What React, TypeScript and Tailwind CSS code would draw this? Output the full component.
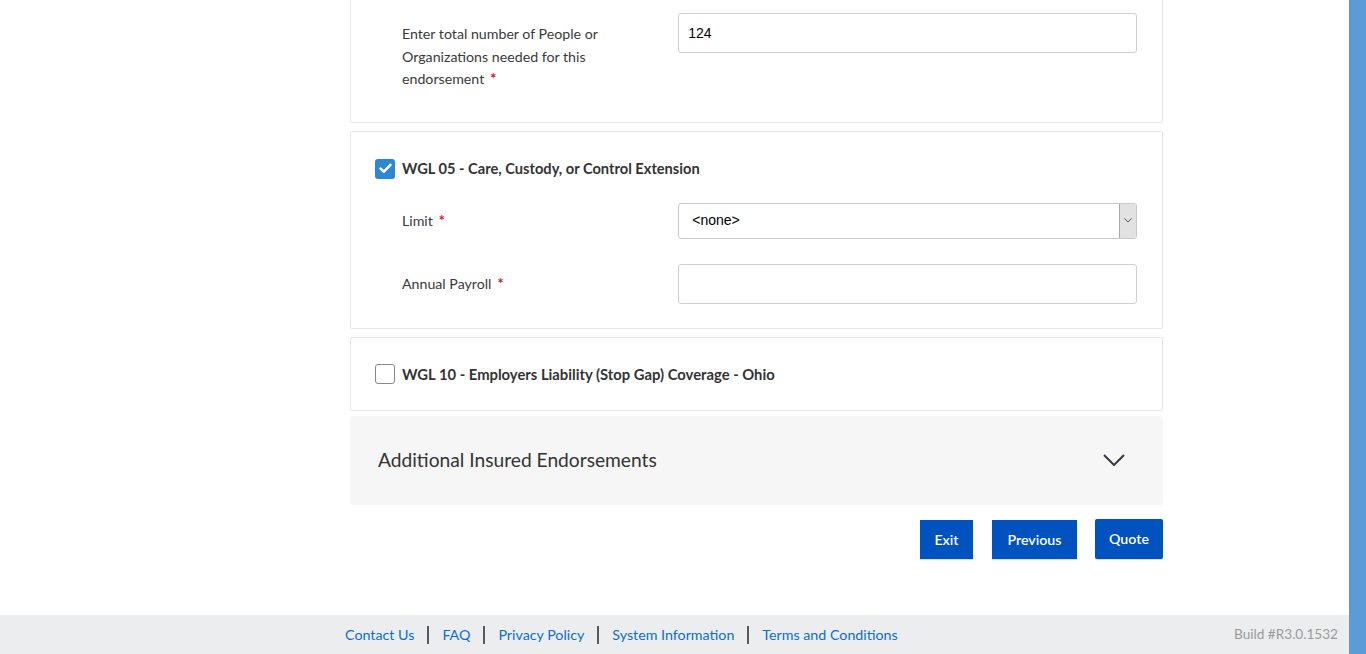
import React from "react";

const font = { fontFamily: "Lato, 'Noto Sans', sans-serif" };

function Req() {
  return <span className="ml-[6px] text-[#e0101a] font-bold">*</span>;
}

function CheckBox({ checked }: { checked: boolean }) {
  if (checked) {
    return (
      <div className="w-[20px] h-[20px] rounded-[3px] bg-[#2f86d3] flex items-center justify-center shrink-0">
        <svg width="13" height="11" viewBox="0 0 13 11">
          <path d="M1.6 5.6 L4.9 8.7 L11.4 1.8" stroke="#fff" strokeWidth="2.6" fill="none" strokeLinecap="round" strokeLinejoin="round" />
        </svg>
      </div>
    );
  }
  return <div className="w-[20px] h-[20px] rounded-[3px] bg-white border border-[#8a8a8a] shrink-0" />;
}

export default function App() {
  return (
    <div className="flex w-[1366px] h-[654px] overflow-hidden bg-white" style={font}>
      <div className="flex-1 flex flex-col min-w-0">
        <div className="flex-1 flex flex-col">
          <div className="ml-[350px] w-[813px] flex flex-col">
            {/* Card 1 */}
            <div className="-mt-[10px] border border-[#e6e6e6] rounded-[2px] pt-[22px] pb-[31px] pl-[51px] pr-[25px] flex">
              <div className="w-[277px] pt-[10px] text-[14.2px] leading-[22.5px] text-[#3a3a3a]">
                Enter total number of People or Organizations needed for this endorsement
                <Req />
              </div>
              <div className="w-[460px] h-[40px] border border-[#cfcfcf] rounded-[3px] flex items-center pl-[9px] text-[14px] text-black" style={{ fontFamily: "'Liberation Sans', Arial, sans-serif" }}>
                124
              </div>
            </div>
            {/* Card 2 */}
            <div className="mt-[8px] border border-[#e6e6e6] rounded-[2px] pt-[26px] pb-[24px] pl-[24px] pr-[25px] flex flex-col">
              <div className="flex items-center h-[20px] pt-[2px]">
                <CheckBox checked />
                <span className="ml-[7px] text-[14.65px] font-bold text-[#333]">WGL 05 - Care, Custody, or Control Extension</span>
              </div>
              <div className="flex items-center mt-[25px] pl-[27px]">
                <div className="w-[277px] text-[14.2px] text-[#3a3a3a]">
                  Limit
                  <Req />
                </div>
                <div className="w-[460px] h-[36px] border border-[#c8c8c8] rounded-[3px] flex items-stretch text-[14px] text-black" style={{ fontFamily: "'Liberation Sans', Arial, sans-serif" }}>
                  <div className="flex-1 flex items-center pl-[13px]">&lt;none&gt;</div>
                  <div className="w-[17px] bg-[#e2e2e2] border-l border-[#a8a8a8] flex items-center justify-center rounded-r-[2px]">
                    <svg width="8" height="5" viewBox="0 0 8 5">
                      <path d="M0.5 0.5 L4 4 L7.5 0.5" stroke="#555" strokeWidth="1" fill="none" />
                    </svg>
                  </div>
                </div>
              </div>
              <div className="flex items-center mt-[25px] pl-[27px]">
                <div className="w-[277px] text-[14.2px] text-[#3a3a3a]">
                  Annual Payroll
                  <Req />
                </div>
                <div className="w-[460px] h-[40px] border border-[#cfcfcf] rounded-[3px]" />
              </div>
            </div>
            {/* Card 3 */}
            <div className="mt-[8px] border border-[#e6e6e6] rounded-[2px] pt-[25px] pb-[25px] pl-[24px] pr-[25px] flex items-center">
              <CheckBox checked={false} />
              <span className="ml-[7px] text-[14.8px] font-bold text-[#333]">WGL 10 - Employers Liability (Stop Gap) Coverage - Ohio</span>
            </div>
            {/* Accordion */}
            <div className="mt-[5px] h-[89px] bg-[#f6f6f6] rounded-[3px] flex items-center justify-between pl-[28px] pr-[38px]">
              <span className="text-[19.2px] text-[#333]">Additional Insured Endorsements</span>
              <svg width="22" height="12" viewBox="0 0 22 12">
                <path d="M1 1 L11 11 L21 1" stroke="#333a44" strokeWidth="2" fill="none" />
              </svg>
            </div>
            {/* Buttons */}
            <div className="mt-[14px] flex justify-end items-start">
              <button className="mr-[19px] mt-[1px] w-[53px] h-[39px] bg-[#0052be] text-white text-[14.2px] font-semibold shadow-[0_1px_1px_rgba(0,0,0,0.15)]">Exit</button>
              <button className="mr-[18px] mt-[1px] w-[85px] h-[39px] bg-[#0052be] text-white text-[14.2px] font-semibold shadow-[0_1px_1px_rgba(0,0,0,0.15)]">Previous</button>
              <button className="w-[68px] h-[40px] bg-[#0052be] text-white text-[14.2px] font-semibold rounded-[2px] shadow-[0_1px_1px_rgba(0,0,0,0.15)]">Quote</button>
            </div>
          </div>
        </div>
        {/* Footer */}
        <div className="h-[39px] bg-[#ecedef] flex items-center pl-[345px] pr-[11px] text-[14.25px]">
          <div className="flex items-center text-[#0a6fd4]">
            <span>Contact Us</span>
            <span className="mx-[13px] w-[2px] h-[18px] bg-[#5a5a5a]" />
            <span>FAQ</span>
            <span className="mx-[13px] w-[2px] h-[18px] bg-[#5a5a5a]" />
            <span>Privacy Policy</span>
            <span className="mx-[13px] w-[2px] h-[18px] bg-[#5a5a5a]" />
            <span>System Information</span>
            <span className="mx-[13px] w-[2px] h-[18px] bg-[#5a5a5a]" />
            <span>Terms and Conditions</span>
          </div>
          <span className="ml-auto text-[#9a9a9a] text-[13.6px]">Build #R3.0.1532</span>
        </div>
      </div>
      <div className="w-[17px] h-full bg-[#5b9bd8] shrink-0" />
    </div>
  );
}
